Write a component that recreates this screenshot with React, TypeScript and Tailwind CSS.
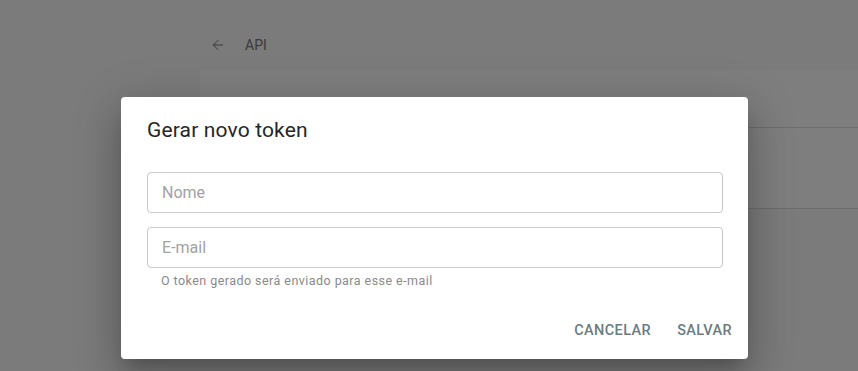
import { ArrowLeft } from "lucide-react"

export default function App() {
  return (
    <div
      className="relative h-[371px] w-full overflow-hidden bg-[#7b7b7b]"
      style={{ fontFamily: "Roboto, 'Liberation Sans', sans-serif" }}
    >
      {/* Página ao fundo */}
      <div className="pl-[200px]">
        <div className="flex h-[70px] items-start gap-[19px] pl-[10px] pt-[36px] text-[#3a3a3a]">
          <ArrowLeft className="mt-[1px] h-[16px] w-[16px]" strokeWidth={1.5} />
          <span className="text-[14px] leading-[18px]">API</span>
        </div>
        <div className="h-[139px] border-b border-[#6c6c6c] bg-[#7e7e7e]">
          <div className="h-[58px] border-b border-[#6e6e6e]" />
        </div>
      </div>

      {/* Diálogo */}
      <div className="absolute left-[121px] top-[97px] flex h-[262px] w-[627px] flex-col rounded-[4px] bg-white shadow-[0_11px_15px_-7px_rgba(0,0,0,0.2),0_24px_38px_3px_rgba(0,0,0,0.14),0_9px_46px_8px_rgba(0,0,0,0.12)]">
        <h2 className="px-[26px] pt-[17px] text-[21px] font-normal leading-[32px] tracking-[0.15px] text-[#262626]">
          Gerar novo token
        </h2>
        <div className="flex flex-col pl-[26px] pr-[25px] pt-[26px]">
          <div className="flex h-[41px] items-center rounded-[4px] border border-[#c8c8c8] px-[14px]">
            <input
              placeholder="Nome"
              className="w-full bg-transparent text-[16px] text-[#333] outline-none placeholder:text-[#a2a2a2]"
            />
          </div>
          <div className="mt-[14px] flex h-[41px] items-center rounded-[4px] border border-[#c8c8c8] px-[14px]">
            <input
              placeholder="E-mail"
              className="w-full bg-transparent text-[16px] text-[#333] outline-none placeholder:text-[#a2a2a2]"
            />
          </div>
          <p className="mt-[3px] pl-[14px] text-[12.5px] leading-[20px] tracking-[0.45px] text-[#8a8a8a]">
            O token gerado será enviado para esse e-mail
          </p>
        </div>
        <div className="mt-auto flex justify-end gap-[10px] p-[8px] pb-[10px]">
          <button className="h-[36px] rounded px-[8px] text-[14.5px] font-medium uppercase tracking-[0.4px] text-[#6b7c80]">
            Cancelar
          </button>
          <button className="h-[36px] rounded px-[8px] text-[14.5px] font-medium uppercase tracking-[0.4px] text-[#6b7c80]">
            Salvar
          </button>
        </div>
      </div>
    </div>
  )
}
